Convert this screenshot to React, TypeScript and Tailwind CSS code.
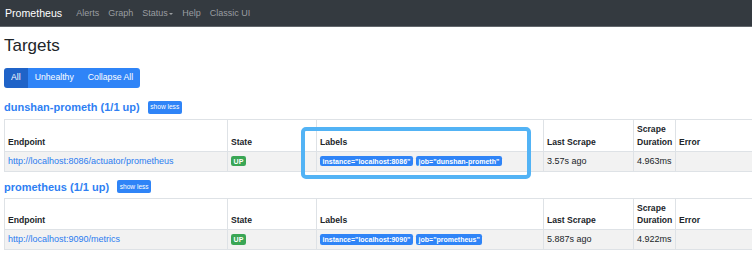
import React from "react";

const FONT = { fontFamily: '"Liberation Sans", Arial, Helvetica, sans-serif' };

type Target = {
  endpoint: string;
  labels: string[];
  lastScrape: string;
  duration: string;
};

function Badge({ children, color }: { children: React.ReactNode; color: string }) {
  return (
    <span
      className={`inline-block ${color} text-white font-bold text-[7px] leading-none px-[2.6px] py-[1.6px] rounded-[2.25px] whitespace-nowrap align-baseline`}
    >
      {children}
    </span>
  );
}

function Section({ title, target, mt, mb }: { title: string; target: Target; mt: string; mb: string }) {
  return (
    <div className={mt}>
      <div className={`flex items-center h-[14px] gap-[8px] ${mb}`}>
        <span className="font-bold text-[11px] leading-[14px] text-[#2f7ff3] whitespace-nowrap">{title}</span>
        <span className="h-[13px] flex items-center px-[2.6px] rounded-[2px] bg-[#2f84f7] text-white text-[6.6px] whitespace-nowrap">
          show less
        </span>
      </div>
      <table className="table-fixed border-collapse w-[756px] text-[#212529]">
        <colgroup>
          <col className="w-[223px]" />
          <col className="w-[89px]" />
          <col className="w-[227px]" />
          <col className="w-[90px]" />
          <col className="w-[42px]" />
          <col className="w-[85px]" />
        </colgroup>
        <thead>
          <tr>
            {["Endpoint", "State", "Labels", "Last Scrape", "Scrape Duration", "Error"].map((h) => (
              <th
                key={h}
                className="border border-[#dee2e6] text-left align-bottom font-bold text-[8.6px] leading-[12.5px] px-[3px] pt-[3px] pb-[2.5px]"
              >
                {h}
              </th>
            ))}
          </tr>
        </thead>
        <tbody>
          <tr className="bg-[#f2f2f2]">
            <td className="border border-[#dee2e6] text-[9px] leading-[13px] px-[3px] py-[3px] whitespace-nowrap">
              <span className="text-[#2b7cf0]">{target.endpoint}</span>
            </td>
            <td className="border border-[#dee2e6] text-[9px] leading-[13px] px-[3px] py-[3px]">
              <Badge color="bg-[#3aa655]">UP</Badge>
            </td>
            <td className="border border-[#dee2e6] text-[9px] leading-[13px] px-[3px] py-[3px] whitespace-nowrap">
              {target.labels.map((l, i) => (
                <span key={l} className={i > 0 ? "ml-[3px]" : ""}>
                  <Badge color="bg-[#2f84f7]">{l}</Badge>
                </span>
              ))}
            </td>
            <td className="border border-[#dee2e6] text-[9px] leading-[13px] px-[3px] py-[3px] whitespace-nowrap">
              {target.lastScrape}
            </td>
            <td className="border border-[#dee2e6] text-[9px] leading-[13px] px-[3px] py-[3px] whitespace-nowrap">
              {target.duration}
            </td>
            <td className="border border-[#dee2e6] text-[9px] leading-[13px] px-[3px] py-[3px]"></td>
          </tr>
        </tbody>
      </table>
    </div>
  );
}

export default function App() {
  const links = ["Alerts", "Graph", "Status", "Help", "Classic UI"];
  return (
    <div className="relative w-full h-[274px] overflow-hidden bg-white" style={FONT}>
      <nav className="h-[27px] bg-[#343a40] border-b border-[#62676c] flex items-center pl-[5px]">
        <span className="text-white text-[10.6px] leading-[14px] mr-[9.5px]">Prometheus</span>
        {links.map((l) => (
          <span key={l} className="flex items-center px-[4.5px] text-[9px] leading-[14px] text-[#9a9da0]">
            {l}
            {l === "Status" && (
              <span className="ml-[1.5px] mt-[1px] w-0 h-0 border-t-[2.6px] border-t-[#9a9da0] border-x-[2.6px] border-x-transparent" />
            )}
          </span>
        ))}
      </nav>
      <div className="pl-[4px]">
        <h2 className="mt-[9px] text-[17px] leading-[20px] text-[#212529] font-normal">Targets</h2>
        <div className="mt-[12px] flex w-fit h-[20px] rounded-[3px] overflow-hidden text-white text-[8.7px]">
          <span className="flex items-center px-[7px] bg-[#1f63c8]">All</span>
          <span className="flex items-center px-[7px] bg-[#2f84f7]">Unhealthy</span>
          <span className="flex items-center px-[7px] bg-[#2f84f7]">Collapse All</span>
        </div>
        <Section
          title="dunshan-prometh (1/1 up)"
          mt="mt-[12px]"
          mb="mb-[5px]"
          target={{
            endpoint: "http://localhost:8086/actuator/prometheus",
            labels: ['instance="localhost:8086"', 'job="dunshan-prometh"'],
            lastScrape: "3.57s ago",
            duration: "4.963ms",
          }}
        />
        <Section
          title="prometheus (1/1 up)"
          mt="mt-[8px]"
          mb="mb-[4px]"
          target={{
            endpoint: "http://localhost:9090/metrics",
            labels: ['instance="localhost:9090"', 'job="prometheus"'],
            lastScrape: "5.887s ago",
            duration: "4.922ms",
          }}
        />
      </div>
      <div className="absolute left-[301px] top-[127px] w-[230px] h-[52px] border-[4px] border-[#52b3f5] rounded-[5px] pointer-events-none" />
    </div>
  );
}
